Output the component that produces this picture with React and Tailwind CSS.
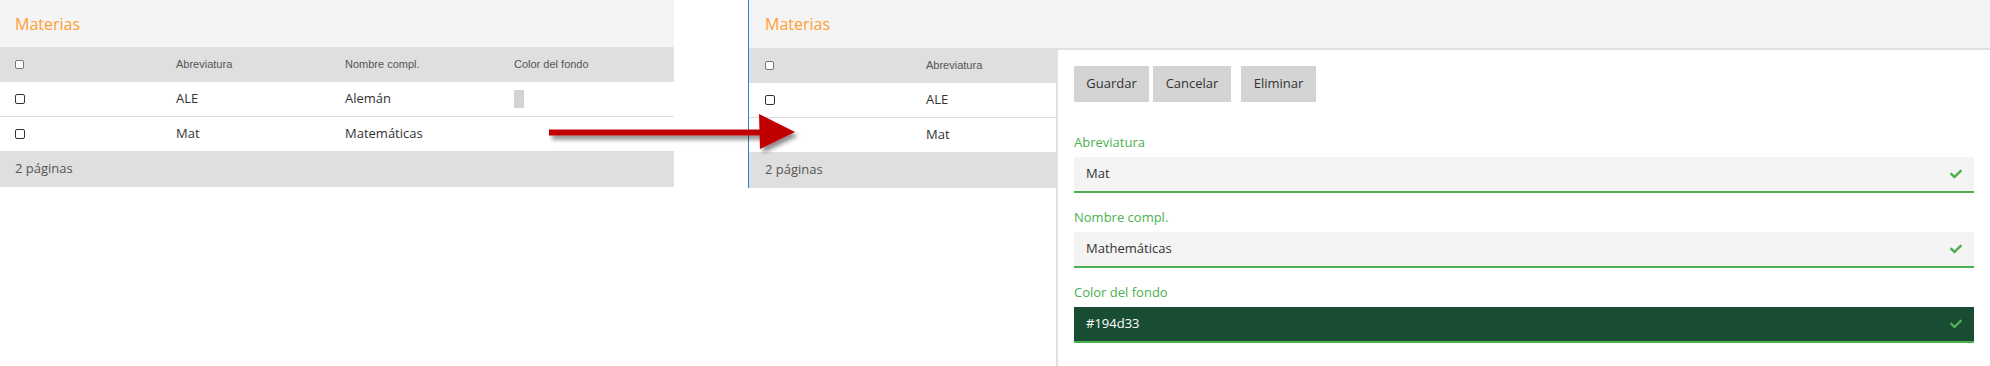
import React from "react";

const Check = ({ className = "" }) => (
  <svg viewBox="0 0 512 512" width="12" height="12" className={className} fill="currentColor">
    <path d="M173.9 439.4l-166.4-166.4c-10-10-10-26.2 0-36.2l36.2-36.2c10-10 26.2-10 36.2 0L192 312.7 432.1 72.6c10-10 26.2-10 36.2 0l36.2 36.2c10 10 10 26.2 0 36.2l-294.4 294.4c-10 10-26.2 10-36.2 0z" />
  </svg>
);

const Box = ({ head }) => (
  <div
    className={
      head
        ? "w-[9px] h-[9px] border border-[#777] rounded-[2px] bg-white"
        : "w-[10px] h-[10px] border border-[#333] rounded-[2px] bg-white"
    }
  />
);

function Header({ pl }) {
  return (
    <div className={`h-[47px] bg-[#f4f4f4] flex items-center ${pl}`}>
      <span className="text-[16px] text-[#ffa033] font-['Open_Sans',sans-serif]">Materias</span>
    </div>
  );
}

function LeftTable() {
  const rows = [
    { a: "ALE", n: "Alemán", swatch: true },
    { a: "Mat", n: "Matemáticas", swatch: false },
  ];
  return (
    <div className="w-[674px] shrink-0">
      <Header pl="pl-[15px]" />
      <div className="h-[35px] bg-[#dfdfdf] flex items-center pl-[15px] font-['Liberation_Sans',sans-serif] text-[11px] text-[#555]">
        <div className="w-[161px]"><Box head /></div>
        <div className="w-[169px]">Abreviatura</div>
        <div className="w-[169px]">Nombre compl.</div>
        <div>Color del fondo</div>
      </div>
      {rows.map((r, i) => (
        <div
          key={i}
          className={`h-[34px] flex items-center pl-[15px] text-[13px] text-[#333] font-['Open_Sans',sans-serif] bg-white ${
            i === 0 ? "border-b border-[#dddddd] h-[35px]" : ""
          }`}
        >
          <div className="w-[161px]"><Box /></div>
          <div className="w-[169px]">{r.a}</div>
          <div className="w-[169px]">{r.n}</div>
          <div>{r.swatch && <div className="w-[10px] h-[18px] bg-[#d3d3d3]" />}</div>
        </div>
      ))}
      <div className="h-[36px] bg-[#dfdfdf] flex items-center pl-[15px] text-[13px] text-[#555] font-['Open_Sans',sans-serif]">
        2 páginas
      </div>
    </div>
  );
}

function Field({ label, value, dark }) {
  return (
    <div className="mb-[15px]">
      <div className="text-[13px] leading-[19px] text-[#4caf50] mb-[5px]">{label}</div>
      <div
        className={`h-[36px] border-b-2 border-[#4caf50] flex items-center justify-between pl-[12px] pr-[12px] text-[13px] ${
          dark ? "bg-[#194d33] text-white" : "bg-[#f4f4f4] text-[#333]"
        }`}
      >
        <span>{value}</span>
        <Check className="text-[#4caf50]" />
      </div>
    </div>
  );
}

function RightPanel() {
  return (
    <div className="flex-1 flex flex-col">
      <div className="h-[48px] bg-[#f4f4f4] border-l border-[#2a7fd4] flex items-center pl-[16px]">
        <span className="text-[16px] text-[#ffa033] font-['Open_Sans',sans-serif]">Materias</span>
      </div>
      <div className="flex flex-1">
        <div className="w-[308px] shrink-0 self-start border-l border-[#2a7fd4]">
          <div className="h-[35px] bg-[#dfdfdf] flex items-center pl-[16px] font-['Liberation_Sans',sans-serif] text-[11px] text-[#555]">
            <div className="w-[161px]"><Box head /></div>
            <div>Abreviatura</div>
          </div>
          <div className="h-[35px] border-b border-[#dddddd] bg-white flex items-center pl-[16px] text-[13px] text-[#333] font-['Open_Sans',sans-serif]">
            <div className="w-[161px]"><Box /></div>
            <div>ALE</div>
          </div>
          <div className="h-[34px] bg-white flex items-center pl-[16px] text-[13px] text-[#333] font-['Open_Sans',sans-serif]">
            <div className="w-[161px]"><Box /></div>
            <div>Mat</div>
          </div>
          <div className="h-[36px] bg-[#dfdfdf] flex items-center pl-[16px] text-[13px] text-[#555] font-['Open_Sans',sans-serif]">
            2 páginas
          </div>
        </div>
        <div className="flex-1 bg-white border-t-2 border-l-2 border-[#dfdfdf] pt-[16px] px-[16px] font-['Open_Sans',sans-serif]">
          <div className="flex items-center text-[13px] text-[#333] mb-[31px]">
            <button className="h-[36px] px-[12px] bg-[#d4d4d4] w-[75px]">Guardar</button>
            <button className="h-[36px] px-[12px] bg-[#d4d4d4] w-[78px] ml-[4px]">Cancelar</button>
            <button className="h-[36px] px-[12px] bg-[#d4d4d4] w-[75px] ml-[10px]">Eliminar</button>
          </div>
          <Field label="Abreviatura" value="Mat" />
          <Field label="Nombre compl." value="Mathemáticas" />
          <Field label="Color del fondo" value="#194d33" dark />
        </div>
      </div>
    </div>
  );
}

export default function App() {
  return (
    <div className="relative w-[1990px] h-[366px] bg-white flex overflow-hidden">
      <LeftTable />
      <div className="w-[74px] shrink-0" />
      <RightPanel />
      <svg className="absolute left-[540px] top-[105px]" width="270" height="60" viewBox="0 0 270 60">
        <defs>
          <filter id="sh" x="-10%" y="-30%" width="130%" height="180%">
            <feDropShadow dx="3" dy="4" stdDeviation="2" floodColor="#000" floodOpacity="0.45" />
          </filter>
        </defs>
        <g filter="url(#sh)" fill="#c00000">
          <rect x="9" y="24.5" width="212" height="6" />
          <polygon points="219,9 255,27 220,44" />
        </g>
      </svg>
    </div>
  );
}
